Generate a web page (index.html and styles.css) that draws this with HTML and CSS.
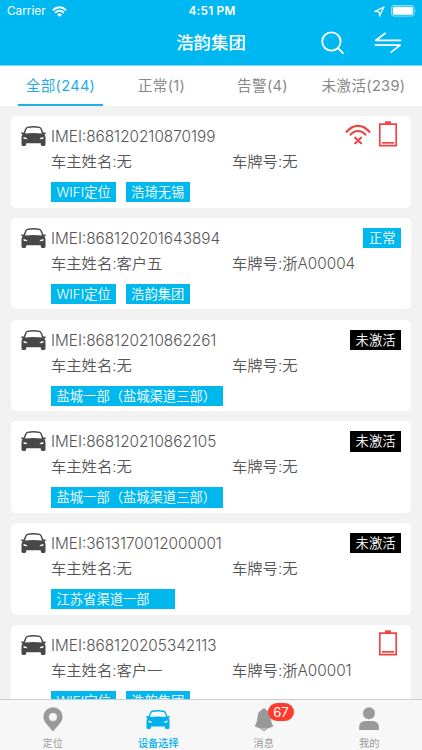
FILE: index.html
```
<!DOCTYPE html>
<html lang="zh-CN">
<head>
    <meta charset="UTF-8">
    <meta name="viewport" content="width=device-width, initial-scale=1.0">
    <title>浩韵集团</title>
    <link rel="stylesheet" href="styles.css">
</head>
<body>
    <!-- shared icons -->
    <svg class="sprite" width="0" height="0">
        <symbol id="car" viewBox="0 0 25 20">
            <path fill-rule="evenodd" d="M6.4 0.7Q12.5-0.5 18.6 0.7Q20.2 1.1 20.9 3L22.3 6.6L24.2 6.4Q25.3 6.7 24.8 7.6L23.4 8.5Q24.5 9.7 24.5 11.5V18.5Q24.5 19.9 23.1 19.9H21.2Q19.8 19.9 19.8 18.5V17.3H5.2V18.5Q5.2 19.9 3.8 19.9H1.9Q0.5 19.9 0.5 18.5V11.5Q0.5 9.7 1.6 8.5L0.2 7.6Q-0.3 6.7 0.8 6.4L2.7 6.6L4.1 3Q4.8 1.1 6.4 0.7ZM6.8 2.1Q5.9 2.3 5.5 3.3L4 7.4Q12.5 6.6 21 7.4L19.5 3.3Q19.1 2.3 18.2 2.1Q12.5 1.1 6.8 2.1ZM2.6 11Q2.2 12.9 3.6 13.1L6.6 13.3Q6 11.6 2.6 11ZM22.4 11Q22.8 12.9 21.4 13.1L18.4 13.3Q19 11.6 22.4 11Z"/>
        </symbol>
        <symbol id="low-battery" viewBox="0 0 20 26">
            <path d="M7 0.3H13V3H7Z"/>
            <path d="M1.8 3.2H18.2V24.6H1.8Z" fill="none" stroke="currentColor" stroke-width="1.7"/>
            <path d="M4 21H16V22.7H4Z"/>
        </symbol>
        <symbol id="no-signal" viewBox="0 0 26 21">
            <g fill="none" stroke="currentColor" stroke-width="2.2" stroke-linecap="round">
                <path d="M1.6 7.8Q6.5 1.8 13 1.8T24.4 7.8"/>
                <path d="M5.6 10.6Q8.8 7 13 7T20.4 10.6"/>
                <path d="M10.2 13.7L16 19.3M16 13.7L10.2 19.3"/>
            </g>
        </symbol>
    </svg>

    <div class="app">
        <header class="header">
            <div class="status-bar">
                <div class="status-left">
                    <span class="carrier">Carrier</span>
                    <svg class="wifi" width="15" height="11" viewBox="0 0 15 11">
                        <g fill="none" stroke="#fff" stroke-width="1.9">
                            <path d="M0.8 4.2Q7.5-1.9 14.2 4.2"/>
                            <path d="M3.1 6.7Q7.5 2.7 11.9 6.7"/>
                        </g>
                        <path fill="#fff" d="M5 8.5Q7.5 6.3 10 8.5L7.5 11Z"/>
                    </svg>
                </div>
                <span class="time">4:51 PM</span>
                <div class="status-right">
                    <svg width="11" height="11" viewBox="0 0 11 11">
                        <path d="M1 5.4L9.8 1.1L5.7 9.8L5.1 6Z" fill="none" stroke="#fff" stroke-width="1.2"/>
                    </svg>
                    <svg width="26" height="12" viewBox="0 0 26 12">
                        <rect x="0.5" y="0.5" width="22.6" height="10.6" rx="2.2" fill="none" stroke="#fff" stroke-opacity="0.55"/>
                        <rect x="1.8" y="1.8" width="20" height="8" rx="1" fill="#fff"/>
                        <path d="M24.2 4Q25.6 5.8 24.2 7.6Z" fill="#fff" fill-opacity="0.5"/>
                    </svg>
                </div>
            </div>
            <div class="title-bar">
                <h1 class="title">浩韵集团</h1>
                <div class="actions">
                    <svg width="23" height="24" viewBox="0 0 23 24">
                        <g fill="none" stroke="#fff" stroke-width="1.8" stroke-linecap="round">
                            <circle cx="10.4" cy="10.5" r="9.2"/>
                            <path d="M17 17.2L21.9 22.1"/>
                        </g>
                    </svg>
                    <svg width="28" height="22" viewBox="0 0 28 22">
                        <g fill="none" stroke="#fff" stroke-width="1.7" stroke-linecap="round" stroke-linejoin="round">
                            <path d="M11.3 1.3L1.8 8.3H26.6"/>
                            <path d="M1.4 13.2H26.2L17.2 20.2"/>
                        </g>
                    </svg>
                </div>
            </div>
        </header>

        <nav class="tabs">
            <a class="tab active">全部(244)</a>
            <a class="tab">正常(1)</a>
            <a class="tab">告警(4)</a>
            <a class="tab">未激活(239)</a>
        </nav>

        <main class="list">
            <div class="card">
                <svg class="car"><use href="#car"/></svg>
                <div class="info">
                    <div class="imei">IMEI:868120210870199</div>
                    <div class="row"><span>车主姓名:无</span><span>车牌号:无</span></div>
                    <div class="tags"><span class="tag">WIFI定位</span><span class="tag">浩琦无锡</span></div>
                </div>
                <div class="state alarms">
                    <svg class="no-signal"><use href="#no-signal"/></svg>
                    <svg class="low-battery"><use href="#low-battery"/></svg>
                </div>
            </div>
            <div class="card">
                <svg class="car"><use href="#car"/></svg>
                <div class="info">
                    <div class="imei">IMEI:868120201643894</div>
                    <div class="row"><span>车主姓名:客户五</span><span>车牌号:浙A00004</span></div>
                    <div class="tags"><span class="tag">WIFI定位</span><span class="tag">浩韵集团</span></div>
                </div>
                <div class="state"><span class="tag">正常</span></div>
            </div>
            <div class="card">
                <svg class="car"><use href="#car"/></svg>
                <div class="info">
                    <div class="imei">IMEI:868120210862261</div>
                    <div class="row"><span>车主姓名:无</span><span>车牌号:无</span></div>
                    <div class="tags"><span class="tag tag-long">盐城一部（盐城渠道三部）</span></div>
                </div>
                <div class="state"><span class="tag inactive">未激活</span></div>
            </div>
            <div class="card">
                <svg class="car"><use href="#car"/></svg>
                <div class="info">
                    <div class="imei">IMEI:868120210862105</div>
                    <div class="row"><span>车主姓名:无</span><span>车牌号:无</span></div>
                    <div class="tags"><span class="tag tag-long">盐城一部（盐城渠道三部）</span></div>
                </div>
                <div class="state"><span class="tag inactive">未激活</span></div>
            </div>
            <div class="card">
                <svg class="car"><use href="#car"/></svg>
                <div class="info">
                    <div class="imei">IMEI:3613170012000001</div>
                    <div class="row"><span>车主姓名:无</span><span>车牌号:无</span></div>
                    <div class="tags"><span class="tag tag-mid">江苏省渠道一部</span></div>
                </div>
                <div class="state"><span class="tag inactive">未激活</span></div>
            </div>
            <div class="card">
                <svg class="car"><use href="#car"/></svg>
                <div class="info">
                    <div class="imei">IMEI:868120205342113</div>
                    <div class="row"><span>车主姓名:客户一</span><span>车牌号:浙A00001</span></div>
                    <div class="tags"><span class="tag">WIFI定位</span><span class="tag">浩韵集团</span></div>
                </div>
                <div class="state alarms">
                    <svg class="low-battery"><use href="#low-battery"/></svg>
                </div>
            </div>
        </main>

        <nav class="tabbar">
            <a class="item">
                <svg width="20" height="25" viewBox="0 0 20 25">
                    <path fill-rule="evenodd" d="M10 0.3A9.6 9.6 0 0 1 19.6 9.9C19.6 15 14.5 18.7 10 24.5C5.5 18.7 0.4 15 0.4 9.9A9.6 9.6 0 0 1 10 0.3ZM10 6A4 4 0 1 0 10 14A4 4 0 1 0 10 6Z"/>
                </svg>
                <span>定位</span>
            </a>
            <a class="item current">
                <svg class="tab-car" width="24" height="25"><use href="#car" y="2.7" width="24" height="19.6"/></svg>
                <span>设备选择</span>
            </a>
            <a class="item">
                <svg width="20" height="25" viewBox="0 0 20 25">
                    <path d="M8.2 2.8Q7.8 1.2 10 1.2T11.8 2.8Q16.2 4.5 16.4 9.4Q16.6 15 19.3 19.2Q15 21.8 10 21.8T0.7 19.2Q3.4 15 3.6 9.4Q3.8 4.5 8.2 2.8Z"/>
                    <path d="M7 21.4Q10 25.2 13 21.4" fill="none" stroke="currentColor" stroke-width="1.2"/>
                </svg>
                <span>消息</span>
                <b class="badge">67</b>
            </a>
            <a class="item">
                <svg width="20" height="25" viewBox="0 0 20 25">
                    <circle cx="10" cy="6.3" r="6"/>
                    <path d="M0.1 23V20.6Q0.1 14 6.5 14H13.5Q19.9 14 19.9 20.6V23Z"/>
                </svg>
                <span>我的</span>
            </a>
        </nav>
    </div>
</body>
</html>
```
FILE: styles.css
```
* {
    box-sizing: border-box;
}

html, body {
    margin: 0;
    padding: 0;
    height: 100%;
    overflow: hidden;
}

body {
    font-family: Inter, "Noto Sans CJK SC", sans-serif;
    background: #f2f2f2;
    color: #555;
}

svg {
    display: block;
    flex: none;
    fill: currentColor;
}

.sprite {
    position: absolute;
}

.app {
    display: flex;
    flex-direction: column;
    width: 422px;
    height: 750px;
}

/* header */
.header {
    flex: none;
    height: 66px;
    background: #00b8f1;
    border-bottom: 1px solid #7edbf8;
    color: #fff;
}

.status-bar {
    display: grid;
    grid-template-columns: 1fr auto 1fr;
    align-items: center;
    height: 22px;
    padding: 0 5px 0 7px;
    font-size: 11.8px;
}

.status-left,
.status-right {
    display: flex;
    align-items: center;
    gap: 6px;
}

.status-right {
    justify-content: flex-end;
}

.time {
    font-weight: 600;
    letter-spacing: 0.25px;
}

.title-bar {
    display: grid;
    grid-template-columns: 1fr auto 1fr;
    align-items: center;
    height: 42px;
    padding: 0 20px;
}

.title {
    grid-column: 2;
    margin: 0;
    font-size: 17.4px;
    font-weight: 500;
    line-height: 42px;
}

.actions {
    display: flex;
    justify-content: flex-end;
    align-items: center;
    gap: 30px;
}

/* filter tabs */
.tabs {
    display: flex;
    flex: none;
    justify-content: space-around;
    height: 40px;
    padding: 0 8px 0 10px;
    background: #fff;
}

.tab {
    display: flex;
    justify-content: center;
    width: 85px;
    font-size: 14.6px;
    line-height: 40px;
    letter-spacing: 0.3px;
    color: #888;
    white-space: nowrap;
}

.tab.active {
    color: #27aedf;
    border-bottom: 2px solid #1cb0e4;
}

/* device cards */
.list {
    display: flex;
    flex: 1;
    flex-direction: column;
    gap: 10.25px;
    min-height: 0;
    padding: 10px 11px 0;
    overflow: hidden;
}

.card {
    display: flex;
    flex: none;
    height: 91.5px;
    padding: 8px 10px 0;
    background: #fff;
    border-radius: 5px;
}

.car {
    width: 25px;
    height: 20px;
    margin: 2px 5px 0 0;
    color: #484848;
}

.info {
    flex: 1;
    font-size: 15.3px;
    font-weight: 350;
    white-space: nowrap;
}

.imei {
    height: 25px;
    line-height: 25px;
}

.row {
    display: grid;
    grid-template-columns: 181px auto;
    height: 26px;
    line-height: 26px;
}

.tags {
    display: flex;
    gap: 10px;
    padding-top: 7px;
}

.tag {
    display: block;
    height: 20.3px;
    padding: 0 5.5px;
    background: #00b7ee;
    color: #fff;
    font-size: 13.3px;
    font-weight: 350;
    line-height: 20px;
    white-space: nowrap;
}

.tags .tag {
    width: 64.6px;
}

.tags .tag-long {
    width: 172px;
}

.tags .tag-mid {
    width: 124px;
}

.state .inactive {
    background: #000;
}

.state {
    display: flex;
    flex: none;
    align-items: flex-start;
    width: 0;
    justify-content: flex-end;
    padding-top: 2px;
}

.alarms {
    gap: 7px;
    padding: 0;
    margin-top: -3px;
    color: #ed4545;
    margin-right: 3px;
}

.low-battery {
    width: 20px;
    height: 26px;
}

.no-signal {
    width: 26px;
    height: 21px;
    margin-top: 3px;
}

/* bottom navigation */
.tabbar {
    display: flex;
    flex: none;
    height: 51px;
    background: #f7f7f7;
    border-top: 1px solid #ccc;
}

.item {
    position: relative;
    display: flex;
    flex: 1;
    flex-direction: column;
    align-items: center;
    padding-top: 7px;
    font-size: 10.2px;
    line-height: 14px;
    color: #999;
}

.item span {
    margin-top: 4px;
}

.current {
    color: #00b0ee;
    font-weight: 500;
}

.badge {
    position: absolute;
    top: 3px;
    left: 57px;
    width: 26px;
    height: 18px;
    border-radius: 9px;
    background: #ff3b30;
    color: #fff;
    font-size: 13px;
    font-weight: 400;
    line-height: 18px;
    text-align: center;
}
```
